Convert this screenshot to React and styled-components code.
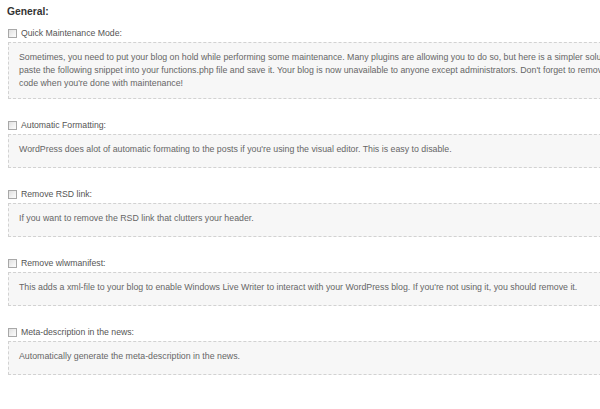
import React from 'react';
import styled, { createGlobalStyle } from 'styled-components';

const GlobalStyle = createGlobalStyle`
  html, body {
    margin: 0;
    padding: 0;
    background: #fff;
    overflow: hidden;
  }
`

// Styles
const Page = styled.div`
  width: 644px;
  padding: 0 0 0 8px;
  font-family: 'Liberation Sans', Arial, sans-serif;
`

const Heading = styled.h3`
  margin: 5px 0 0 -1px;
  font-size: 10.3px;
  line-height: 13px;
  font-weight: bold;
  color: #333;
`

const Section = styled.div`
  margin-top: ${props => props.first ? '9px' : '20px'};
`

const Row = styled.label`
  display: flex;
  align-items: center;
  height: 12px;
  margin-bottom: 3px;
  font-size: 8.7px;
  color: #555;
  cursor: pointer;
`

const Check = styled.span`
  box-sizing: border-box;
  display: inline-block;
  width: 9px;
  height: 9px;
  margin-right: 4px;
  border: 1px solid #a8a8a8;
  background: linear-gradient(135deg, #e0e0e0 0%, #f2f2f2 60%, #fcfcfc 100%);
`

const Box = styled.div`
  min-height: 16px;
  border: 1px dashed #d2d2d2;
  background: #f7f7f7;
  padding: 8px 10px 8px 10px;
  font-size: 8.8px;
  line-height: 13px;
  color: #666;
`

const options = [
  {
    label: 'Quick Maintenance Mode:',
    text: "Sometimes, you need to put your blog on hold while performing some maintenance. Many plugins are allowing you to do so, but here is a simpler solution: Just paste the following snippet into your functions.php file and save it. Your blog is now unavailable to anyone except administrators. Don't forget to remove the code when you're done with maintenance!"
  },
  {
    label: 'Automatic Formatting:',
    text: "WordPress does alot of automatic formating to the posts if you're using the visual editor. This is easy to disable."
  },
  {
    label: 'Remove RSD link:',
    text: 'If you want to remove the RSD link that clutters your header.'
  },
  {
    label: 'Remove wlwmanifest:',
    text: "This adds a xml-file to your blog to enable Windows Live Writer to interact with your WordPress blog. If you're not using it, you should remove it."
  },
  {
    label: 'Meta-description in the news:',
    text: 'Automatically generate the meta-description in the news.'
  }
]

const App = () => {
  return (
    <Page>
      <GlobalStyle />
      <Heading>General:</Heading>
      {options.map((option, i) => (
        <Section key={option.label} first={i === 0}>
          <Row>
            <Check />
            {option.label}
          </Row>
          <Box>{option.text}</Box>
        </Section>
      ))}
    </Page>
  )
}

export default App;
